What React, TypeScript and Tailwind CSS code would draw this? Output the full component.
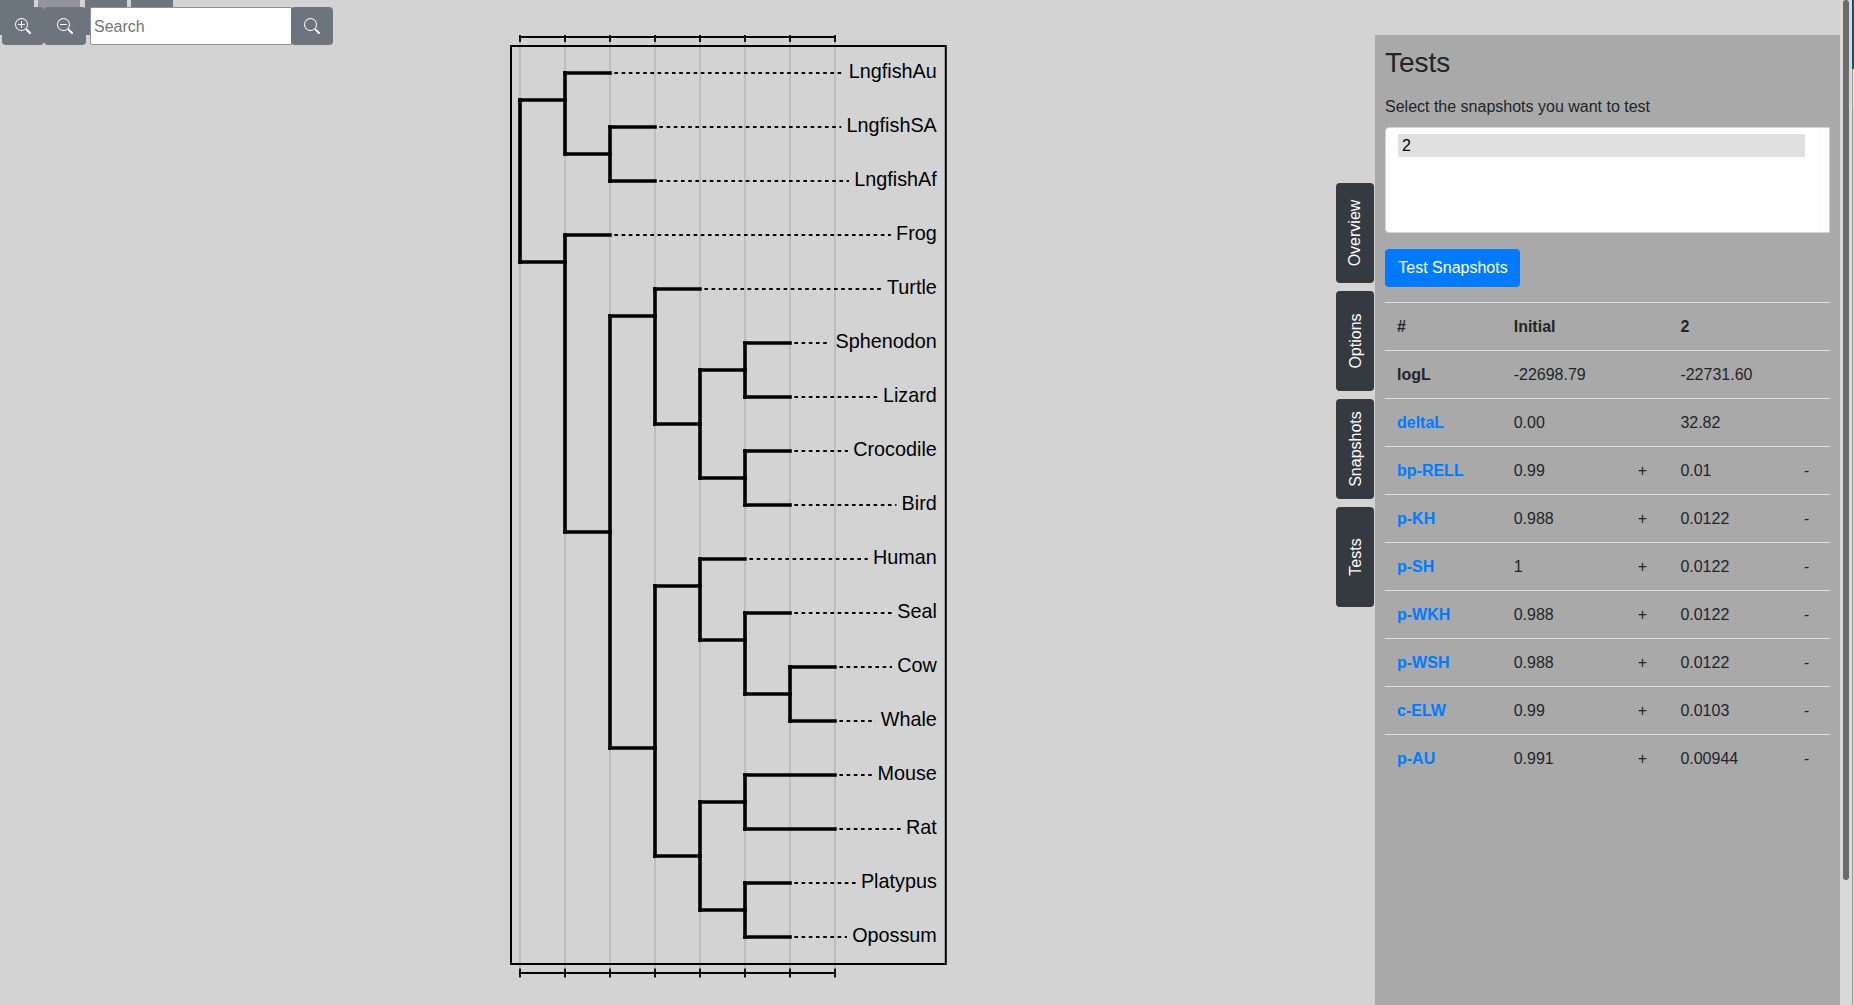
import React from "react";

const gx = (k: number) => 520 + 45 * k;
const gy = (u: number) => 73 + 27 * u;

// [name, row, column where the branch starts, column where it ends, label width]
const leaves: [string, number, number, number, number][] = [
  ["LngfishAu", 0, 1, 2, 88],
  ["LngfishSA", 2, 2, 3, 90.3],
  ["LngfishAf", 4, 2, 3, 82.6],
  ["Frog", 6, 1, 2, 40.7],
  ["Turtle", 8, 3, 4, 50.6],
  ["Sphenodon", 10, 5, 6, 101.3],
  ["Lizard", 12, 5, 6, 54],
  ["Crocodile", 14, 5, 6, 83.7],
  ["Bird", 16, 5, 6, 35.2],
  ["Human", 18, 4, 5, 63.9],
  ["Seal", 20, 5, 6, 39.6],
  ["Cow", 22, 6, 7, 39.6],
  ["Whale", 24, 6, 7, 56.1],
  ["Mouse", 26, 5, 7, 59.4],
  ["Rat", 28, 5, 7, 30.8],
  ["Platypus", 30, 5, 6, 76],
  ["Opossum", 32, 5, 6, 84.7],
];

// [column, first row, last row]
const verticals: [number, number, number][] = [
  [0, 1, 7], [1, 0, 3], [2, 2, 4], [1, 6, 17], [2, 9, 25], [3, 8, 13], [4, 11, 15],
  [5, 10, 12], [5, 14, 16], [3, 19, 29], [4, 18, 21], [5, 20, 23], [6, 22, 24],
  [4, 27, 31], [5, 26, 28], [5, 30, 32],
];

// [row, column where the branch starts]
const inner: [number, number][] = [
  [1, 0], [3, 1], [7, 0], [17, 1], [9, 2], [25, 2], [13, 3], [11, 4], [15, 4],
  [19, 3], [21, 4], [23, 5], [29, 3], [27, 4], [31, 4],
];

const ticks = [0, 1, 2, 3, 4, 5, 6, 7];

function Tree() {
  return (
    <svg width="1375" height="1005" className="block" fontFamily="'Liberation Sans', Arial, sans-serif">
      {ticks.map((k) => (
        <line key={k} x1={gx(k)} x2={gx(k)} y1="42" y2="969" stroke="#bbbbbb" strokeWidth="1.8" />
      ))}
      <g stroke="#000" strokeWidth="2" fill="none">
        <path d="M519 37H836M519 973H836" />
        {ticks.map((k) => (
          <path key={k} d={`M${gx(k)} 35V42M${gx(k)} 968.5V977.5`} strokeWidth="1.8" />
        ))}
        <rect x="511" y="46" width="434.8" height="918" />
      </g>
      <g stroke="#000" strokeWidth="3.6" strokeLinecap="square">
        {verticals.map(([k, a, b]) => (
          <line key={`${k}-${a}`} x1={gx(k)} x2={gx(k)} y1={gy(a)} y2={gy(b)} />
        ))}
        {inner.map(([u, k]) => (
          <line key={u} x1={gx(k)} x2={gx(k + 1)} y1={gy(u)} y2={gy(u)} />
        ))}
      </g>
      {leaves.map(([name, u, a, b, w]) => (
        <g key={name}>
          <line x1={gx(a)} x2={gx(b)} y1={gy(u)} y2={gy(u)} stroke="#000" strokeWidth="3.6" strokeLinecap="square" />
          <line x1={gx(b) + 4.4} x2={931.6 - w} y1={gy(u)} y2={gy(u)} stroke="#000" strokeWidth="1.8" strokeDasharray="3.6" />
          <text x="936.8" y={gy(u) + 5} textAnchor="end" fontSize="19.8">{name}</text>
        </g>
      ))}
    </svg>
  );
}

function Glass({ sign }: { sign?: "in" | "out" }) {
  return (
    <svg width="16" height="16" viewBox="0 0 16 16" fill="#fff">
      <path fillRule="evenodd" d="M6.5 12a5.5 5.5 0 1 0 0-11 5.5 5.5 0 0 0 0 11zM13 6.5a6.5 6.5 0 1 1-13 0 6.5 6.5 0 0 1 13 0z" />
      <path d="M10.344 11.742c.03.04.062.078.098.115l3.85 3.85a1 1 0 0 0 1.415-1.414l-3.85-3.85a1.007 1.007 0 0 0-.115-.1 6.538 6.538 0 0 1-1.398 1.4z" />
      {sign && <path d="M3.5 6h6a.5.5 0 0 1 0 1h-6a.5.5 0 0 1 0-1z" />}
      {sign === "in" && <path d="M6 3.5a.5.5 0 0 1 1 0v6a.5.5 0 0 1-1 0z" />}
    </svg>
  );
}

const rows = [
  ["logL", "-22698.79", "", "-22731.60", ""],
  ["deltaL", "0.00", "", "32.82", ""],
  ["bp-RELL", "0.99", "+", "0.01", "-"],
  ["p-KH", "0.988", "+", "0.0122", "-"],
  ["p-SH", "1", "+", "0.0122", "-"],
  ["p-WKH", "0.988", "+", "0.0122", "-"],
  ["p-WSH", "0.988", "+", "0.0122", "-"],
  ["c-ELW", "0.99", "+", "0.0103", "-"],
  ["p-AU", "0.991", "+", "0.00944", "-"],
];
const rowClass =
  "grid h-12 grid-cols-[116.7px_124px_42.7px_123.6px_38px] border-t border-[#dee2e6] pt-3 leading-6 [&>*]:pl-3";

export default function App() {
  return (
    <div className="relative flex h-[1005px] w-[1854px] overflow-hidden bg-[#d3d3d3] font-['Liberation_Sans',Arial,sans-serif] text-base text-[#212529]">
      <main className="w-[1375px] shrink-0">
        <Tree />
      </main>

      <div className="absolute top-0 left-0 flex h-[35px] gap-1">
        <div className="w-[34px] bg-[#6c757d]" />
        <div className="w-[42px] bg-[#9095a0]" />
        <div className="ml-[1px] w-[42px] bg-[#6c757d]" />
        <div className="h-[10px] w-[42px] bg-[#6c757d]" />
      </div>
      <div className="absolute top-[7px] left-[2px] flex h-[38px]">
        <button className="flex w-[42px] items-center justify-center rounded bg-[#6c757d]"><Glass sign="in" /></button>
        <button className="flex w-[42px] items-center justify-center rounded bg-[#6c757d]"><Glass sign="out" /></button>
        <input placeholder="Search" className="mr-[-1px] ml-1 w-[202px] rounded-l-[2px] border border-[#8f8f9d] bg-white px-[3px] pt-[2px] placeholder:text-[#757575]" />
        <button className="relative flex w-[42px] items-center justify-center rounded bg-[#6c757d]"><Glass /></button>
      </div>

      <nav className="absolute top-[183px] left-[1336px] flex flex-col gap-2">
        {["Overview", "Options", "Snapshots", "Tests"].map((t) => (
          <div key={t} className="flex h-[100px] w-[38px] items-center justify-center rounded bg-[#343a40] pl-px text-white">
            <span className="-rotate-90 whitespace-nowrap">{t}</span>
          </div>
        ))}
      </nav>

      <aside className="mt-[35px] w-[465px] shrink-0 bg-[#a9a9a9] px-[10px] pt-[11px]">
        <h3 className="text-[28px] leading-[34px]">Tests</h3>
        <p className="mt-[15px] leading-6">Select the snapshots you want to test</p>
        <div className="mt-2 flex h-[106px] rounded-l border border-[#ced4da] bg-white">
          <div className="mt-[6px] ml-3 h-[23px] w-[407px] bg-[#e0e0e0] pl-1 leading-[23px] text-black">2</div>
          <div className="ml-3 flex-1 bg-[#fcfcfc]" />
        </div>
        <button className="mt-4 block h-[38px] w-[135px] rounded bg-[#007bff] pl-px text-white">Test Snapshots</button>
        <div className="mt-[15px]">
          <div className={rowClass}>
            <b>#</b>
            <b>Initial</b>
            <span />
            <b>2</b>
          </div>
          {rows.map(([name, ...cells]) => (
            <div key={name} className={rowClass}>
              <b className={name === "logL" ? "" : "text-[#007bff]"}>{name}</b>
              {cells.map((c, i) => (
                <span key={i}>{c}</span>
              ))}
            </div>
          ))}
        </div>
      </aside>

      <div className="flex w-3 shrink-0 justify-center bg-[#dadada]">
        <div className="h-[880px] w-[6px] rounded-[3px] bg-[#6b6b6b]" />
      </div>
      <div className="flex w-[2px] shrink-0 flex-col">
        <div className="h-[69px] bg-[#005a80]" />
        <div className="h-[39px] border-l border-[#999999] bg-[#e8e8e4]" />
        <div className="flex-1 border-l border-[#999999] bg-[#dadada]" />
      </div>
    </div>
  );
}
